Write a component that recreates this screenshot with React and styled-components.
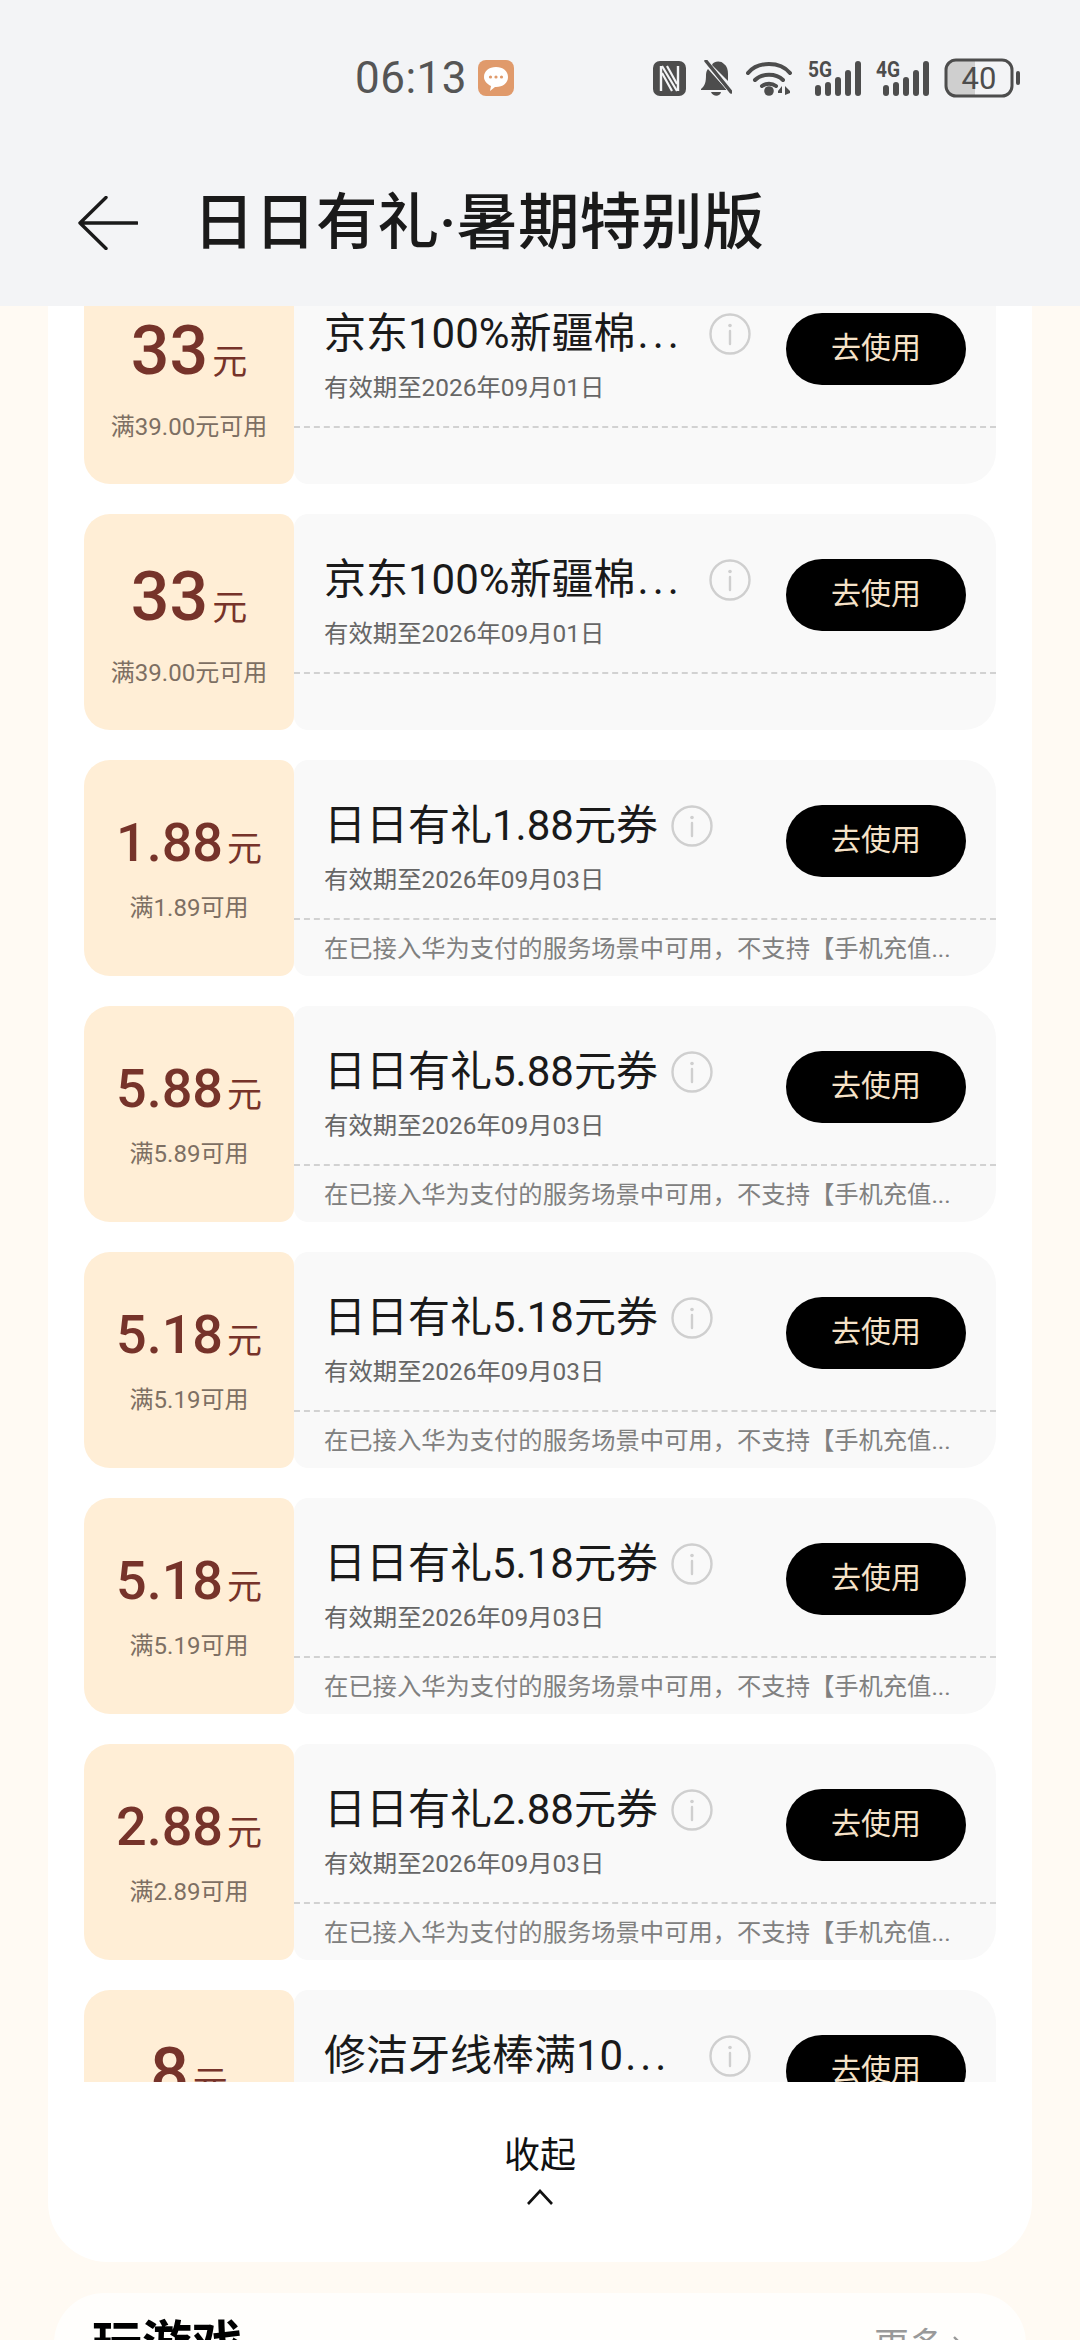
import React from "react";
import styled, { createGlobalStyle } from "styled-components";

const GlobalStyle = createGlobalStyle`
	html, body {
		margin: 0;
		padding: 0;
		background: #fffaf3;
	}
	* {
		box-sizing: border-box;
	}
`;

const FONT = `Roboto, "Noto Sans CJK SC", sans-serif`;

const coupons = [
	{ amount: "33", min: "满39.00元可用", title: "京东100%新疆棉", clipped: true, date: "有效期至2026年09月01日" },
	{ amount: "33", min: "满39.00元可用", title: "京东100%新疆棉", clipped: true, date: "有效期至2026年09月01日" },
	{ amount: "1.88", min: "满1.89可用", title: "日日有礼1.88元券", date: "有效期至2026年09月03日", note: true },
	{ amount: "5.88", min: "满5.89可用", title: "日日有礼5.88元券", date: "有效期至2026年09月03日", note: true },
	{ amount: "5.18", min: "满5.19可用", title: "日日有礼5.18元券", date: "有效期至2026年09月03日", note: true },
	{ amount: "5.18", min: "满5.19可用", title: "日日有礼5.18元券", date: "有效期至2026年09月03日", note: true },
	{ amount: "2.88", min: "满2.89可用", title: "日日有礼2.88元券", date: "有效期至2026年09月03日", note: true },
	{ amount: "8", min: "满10.00元可用", title: "修洁牙线棒满10", clipped: true, date: "有效期至2026年09月01日" },
];

function NfcIcon() {
	return (
		<svg width="33" height="35" viewBox="0 0 33 35">
			<rect width="33" height="35" rx="7" fill="#4d4d4d" />
			<path d="M8 5v25M25 5v25" stroke="#f3f4f6" strokeWidth="2.4" fill="none" />
			<path d="M9 5l15 25M9 12l10 18M14 5l10 18" stroke="#f3f4f6" strokeWidth="2.2" fill="none" />
		</svg>
	);
}

function BellOffIcon() {
	return (
		<svg width="32" height="36" viewBox="0 0 32 36">
			<path d="M1 29c4-3 5-7 5-14 0-3 1-5 2-6l18 20v1H1z" fill="#4d4d4d" />
			<path d="M12 5c1-4 9-5 12-1 3 2 4 6 4 10v7z" fill="#4d4d4d" />
			<path d="M11 32c2 5 9 5 10 0z" fill="#4d4d4d" />
			<path d="M3 0l28 34" stroke="#f3f4f6" strokeWidth="1.8" />
			<path d="M6 1l25 31" stroke="#4d4d4d" strokeWidth="3.4" strokeLinecap="round" />
		</svg>
	);
}

function WifiIcon() {
	return (
		<svg width="48" height="36" viewBox="0 0 48 36">
			<g fill="none" stroke="#4d4d4d" strokeWidth="4" strokeLinecap="round">
				<path d="M2 13C12 1 34 1 44 13" />
				<path d="M9 20c7-7 21-7 28 0" />
				<path d="M16 26c4-3 10-3 14 0" />
			</g>
			<circle cx="23" cy="31" r="4.8" fill="#4d4d4d" />
			<path d="M36 35v-9l-4 5v2h4zM39 35v-9l5 5v2z" fill="#4d4d4d" />
		</svg>
	);
}

function SignalIcon({ label }) {
	const bars = [
		{ x: 10, top: 25 },
		{ x: 20, top: 22 },
		{ x: 30, top: 17 },
		{ x: 40, top: 10 },
		{ x: 50, top: 1 },
	];
	return (
		<svg width="54" height="36" viewBox="0 0 54 36">
			<text
				x="0"
				y="17"
				fontFamily="Roboto, sans-serif"
				fontSize="22"
				fontWeight="700"
				fill="#4d4d4d"
				textLength="24"
				lengthAdjust="spacingAndGlyphs"
			>
				{label}
			</text>
			{bars.map((b) => (
				<line
					key={b.x}
					x1={b.x}
					x2={b.x}
					y1={b.top + 3}
					y2="33"
					stroke="#4d4d4d"
					strokeWidth="6"
					strokeLinecap="round"
				/>
			))}
		</svg>
	);
}

function BatteryIcon() {
	return (
		<svg width="76" height="40" viewBox="0 0 76 40">
			<path d="M12 3h19v34H12a9 9 0 0 1-9-9V12a9 9 0 0 1 9-9z" fill="#cfcfcf" />
			<rect x="2" y="2" width="66" height="36" rx="10" fill="none" stroke="#4d4d4d" strokeWidth="3" />
			<text x="35" y="31" textAnchor="middle" fontFamily="Roboto, sans-serif" fontSize="31" fill="#4d4d4d">
				40
			</text>
			<rect x="72" y="13" width="4" height="14" rx="2" fill="#4d4d4d" />
		</svg>
	);
}

function ChatBadge() {
	return (
		<svg width="36" height="36" viewBox="0 0 36 36">
			<rect width="36" height="36" rx="8" fill="#e09a6b" />
			<path d="M18 7c7 0 12 4 12 10s-5 10-12 10h-1l-5 4 1-5c-4-2-7-5-7-9 0-6 5-10 12-10z" fill="#fff" />
			<circle cx="12.5" cy="17" r="1.6" fill="#e09a6b" />
			<circle cx="18" cy="17" r="1.6" fill="#e09a6b" />
			<circle cx="23.5" cy="17" r="1.6" fill="#e09a6b" />
		</svg>
	);
}

function InfoIcon() {
	return (
		<InfoSvg viewBox="0 0 42 42">
			<circle cx="21" cy="21" r="19.5" fill="none" stroke="#cfcfcf" strokeWidth="2.4" />
			<circle cx="21" cy="12.5" r="1.8" fill="#cfcfcf" />
			<path d="M21 18v13" stroke="#cfcfcf" strokeWidth="2.4" strokeLinecap="round" />
		</InfoSvg>
	);
}

function Coupon({ item }) {
	// whole-number coupons print a bigger figure and sit a bit looser
	const whole = !item.amount.includes(".");
	return (
		<Card>
			<AmountBox>
				<AmountRow>
					<Amount $whole={whole}>{item.amount}</Amount>
					<Unit>元</Unit>
				</AmountRow>
				<MinSpend $whole={whole}>{item.min}</MinSpend>
			</AmountBox>
			<Body>
				<BodyTop>
					<Info>
						<TitleRow>
							<Title $clipped={item.clipped}>
								{item.title}
								{item.clipped && <Dots>...</Dots>}
							</Title>
							<InfoIcon />
						</TitleRow>
						<DateText>{item.date}</DateText>
					</Info>
					<UseButton>去使用</UseButton>
				</BodyTop>
				{item.note && <Note>在已接入华为支付的服务场景中可用，不支持【手机充值...</Note>}
			</Body>
		</Card>
	);
}

export default function App() {
	return (
		<Page>
			<GlobalStyle />
			<Header>
				<StatusBar>
					<Clock>
						<ClockText>06:13</ClockText>
						<ChatBadge />
					</Clock>
					<StatusIcons>
						<NfcIcon />
						<BellOffIcon />
						<WifiIcon />
						<SignalIcon label="5G" />
						<SignalIcon label="4G" />
						<BatteryIcon />
					</StatusIcons>
				</StatusBar>
				<TitleBar>
					<svg width="60" height="54" viewBox="0 0 60 54">
						<path
							d="M28 1.5L2 27l26 25.5M2 27h57"
							fill="none"
							stroke="#1a1a1a"
							strokeWidth="3.4"
							strokeLinecap="round"
							strokeLinejoin="round"
						/>
					</svg>
					<PageTitle>日日有礼·暑期特别版</PageTitle>
				</TitleBar>
			</Header>
			<Panel>
				<CouponWindow>
					<CouponList>
						{coupons.map((item, i) => (
							<Coupon key={i} item={item} />
						))}
					</CouponList>
				</CouponWindow>
				<Collapse>
					<CollapseText>收起</CollapseText>
					<svg width="28" height="16" viewBox="0 0 28 16">
						<path d="M2 15L14 2l12 13" fill="none" stroke="#111" strokeWidth="2.6" />
					</svg>
				</Collapse>
			</Panel>
			<GamePanel>
				<GameTitle>玩游戏</GameTitle>
				<MoreLink>
					更多
					<svg width="14" height="24" viewBox="0 0 14 24">
						<path d="M2 2l10 10L2 22" fill="none" stroke="#999" strokeWidth="2.4" />
					</svg>
				</MoreLink>
			</GamePanel>
		</Page>
	);
}

const Page = styled.div`
	width: 1080px;
	height: 2340px;
	overflow: hidden;
	background: #fffaf3;
	font-family: ${FONT};
`;
const Header = styled.header`
	height: 306px;
	background: #f3f4f6;
	display: flex;
	flex-direction: column;
`;
const StatusBar = styled.div`
	height: 190px;
	padding: 58px 60px 0 355px;
	display: flex;
	justify-content: space-between;
	align-items: flex-start;
`;
const Clock = styled.div`
	display: flex;
	align-items: center;
	gap: 11px;
	height: 40px;
`;
const ClockText = styled.span`
	font-size: 44px;
	line-height: 40px;
	color: #555;
	letter-spacing: 0.5px;
`;
const StatusIcons = styled.div`
	display: flex;
	align-items: center;
	gap: 14px;
	height: 40px;
`;
const TitleBar = styled.div`
	display: flex;
	align-items: center;
	padding: 0 0 0 78px;
	height: 66px;
	gap: 55px;
`;
const PageTitle = styled.h1`
	margin: 0;
	font-size: 61.5px;
	line-height: 66px;
	font-weight: 500;
	color: #1a1a1a;
`;
const Panel = styled.section`
	width: 984px;
	height: 1956px;
	margin-left: 48px;
	background: #fff;
	border-radius: 0 0 60px 60px;
	display: flex;
	flex-direction: column;
`;
const CouponWindow = styled.div`
	height: 1776px;
	overflow: hidden;
	padding: 0 36px;
`;
const CouponList = styled.div`
	margin-top: -38px;
	display: flex;
	flex-direction: column;
	gap: 30px;
`;
const Card = styled.div`
	display: flex;
	height: 216px;
	flex-shrink: 0;
`;
const AmountBox = styled.div`
	width: 210px;
	background: #ffeed6;
	border-radius: 26px 14px 14px 26px;
	display: flex;
	flex-direction: column;
	align-items: center;
	padding-top: 46px;
`;
const AmountRow = styled.div`
	display: flex;
	align-items: baseline;
	height: 74px;
	color: #76332a;
`;
const Amount = styled.span`
	font-size: ${(p) => (p.$whole ? "68px" : "54px")};
	line-height: 74px;
	font-weight: 500;
`;
const Unit = styled.span`
	font-size: 35px;
	margin-left: 4px;
`;
const MinSpend = styled.div`
	margin-top: ${(p) => (p.$whole ? "25px" : "14px")};
	font-size: 24px;
	line-height: 28px;
	color: #7d6f63;
`;
const Body = styled.div`
	flex: 1;
	background: #f9f9f9;
	border-radius: 14px 32px 32px 14px;
	display: flex;
	flex-direction: column;
`;
const BodyTop = styled.div`
	height: 160px;
	padding: 45px 30px 0 30px;
	border-bottom: 2px dashed #d2d2d2;
	display: flex;
	justify-content: space-between;
	align-items: flex-start;
`;
const Info = styled.div`
	display: flex;
	flex-direction: column;
`;
const TitleRow = styled.div`
	display: flex;
	align-items: center;
	gap: 13px;
	height: 42px;
`;
const Title = styled.div`
	font-size: 42px;
	line-height: 42px;
	color: #1a1a1a;
	white-space: nowrap;
	width: ${(p) => (p.$clipped ? "372px" : "auto")};
`;
const Dots = styled.span`
	letter-spacing: 4px;
	margin-left: 2px;
`;
const InfoSvg = styled.svg`
	width: 42px;
	height: 42px;
	flex-shrink: 0;
`;
const DateText = styled.div`
	margin-top: 16px;
	font-size: 24.4px;
	line-height: 34px;
	color: #666;
`;
const UseButton = styled.button`
	width: 180px;
	height: 72px;
	border: none;
	border-radius: 36px;
	background: #000;
	color: #f6e2c8;
	font-family: ${FONT};
	font-size: 30px;
	padding: 0 0 8px;
`;
const Note = styled.div`
	padding: 12px 0 0 30px;
	font-size: 24.3px;
	line-height: 34px;
	color: #808080;
	white-space: nowrap;
`;
const Collapse = styled.div`
	display: flex;
	flex-direction: column;
	align-items: center;
	padding-top: 52px;
	gap: 11px;
`;
const CollapseText = styled.div`
	font-size: 36px;
	line-height: 44px;
	color: #111;
`;
const GamePanel = styled.section`
	width: 972px;
	height: 200px;
	margin: 31px 0 0 54px;
	padding: 22px 60px 0 38px;
	background: #fffefc;
	border-radius: 50px 50px 0 0;
	display: flex;
	justify-content: space-between;
	align-items: flex-start;
`;
const GameTitle = styled.h2`
	margin: 0;
	font-size: 50px;
	line-height: 60px;
	font-weight: 700;
	color: #000;
`;
const MoreLink = styled.span`
	display: flex;
	align-items: center;
	gap: 8px;
	margin-top: 2px;
	font-size: 35px;
	line-height: 60px;
	color: #999;
`;
